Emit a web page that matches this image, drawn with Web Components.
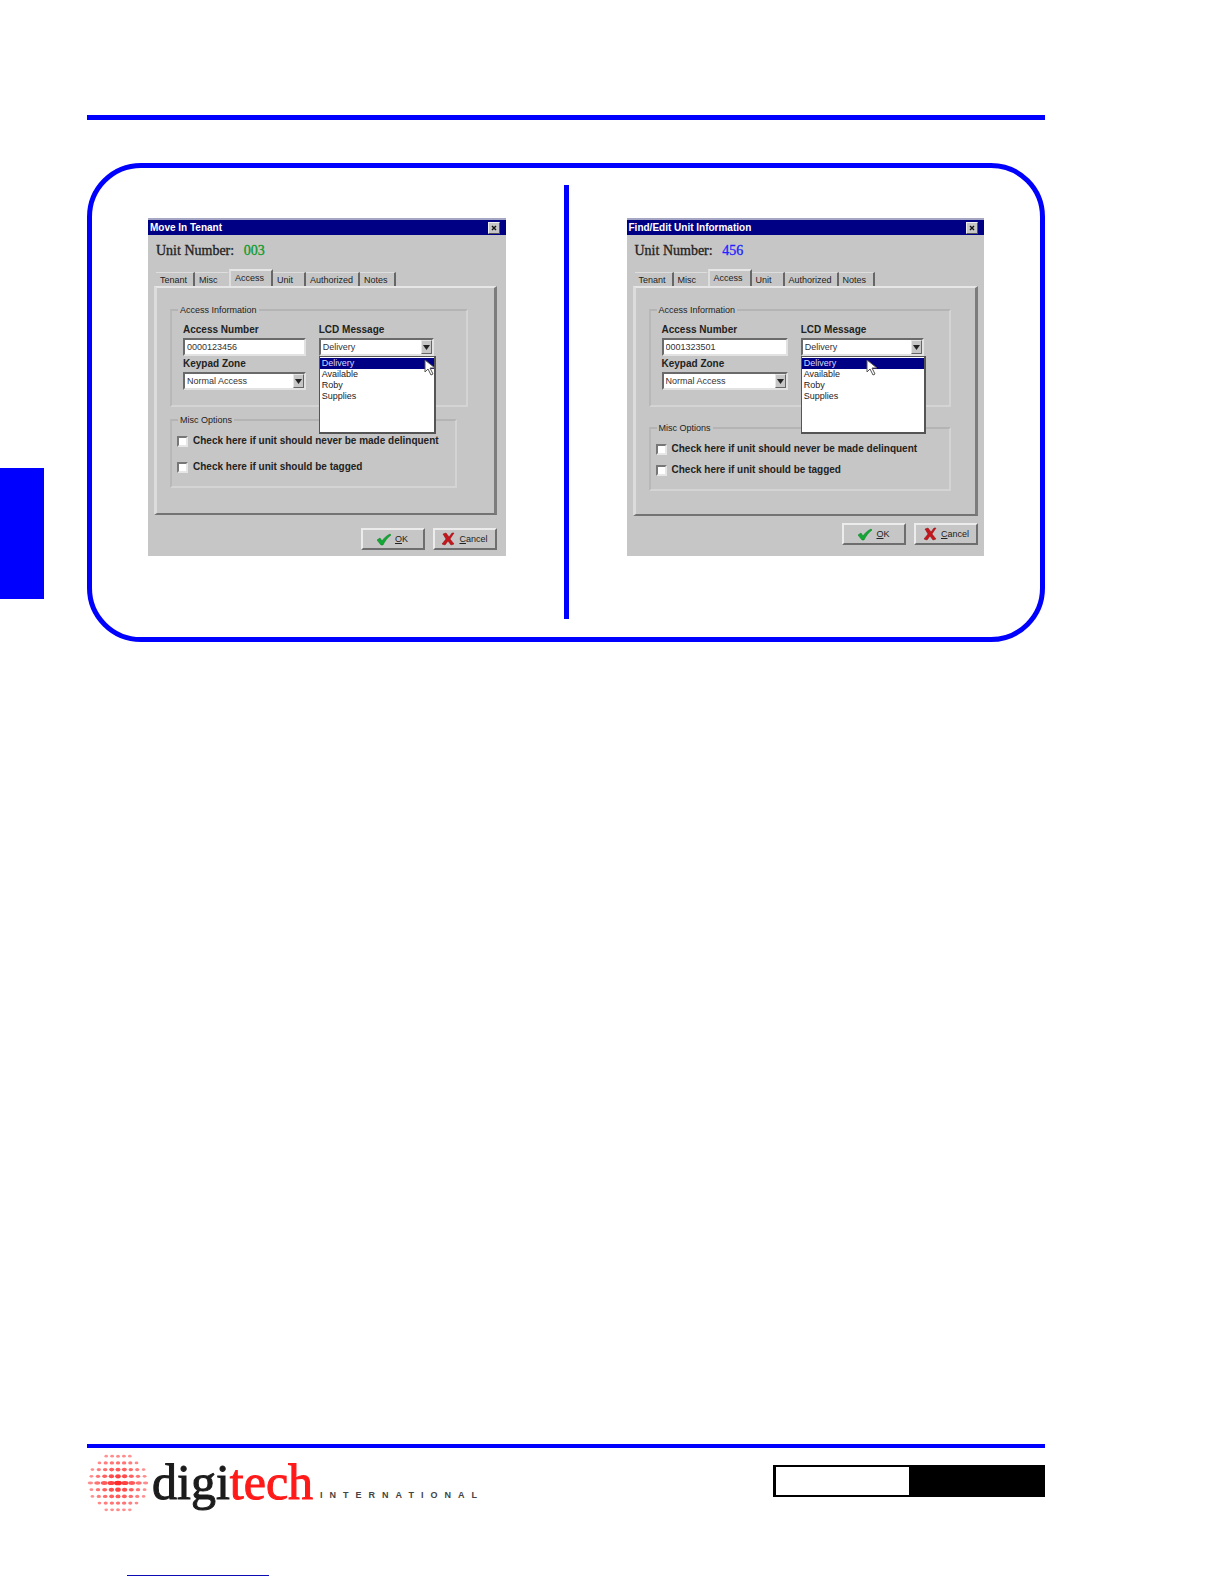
<!DOCTYPE html>
<html lang="en">
<head>
<meta charset="utf-8">
<title>Access tab</title>
<style>
  body {
    margin: 0;
    background: #fff;
    font-family: "Liberation Sans", Arial, sans-serif;
  }

  .find-edit {
    --fields: 125fr 122fr;
    --group-end: 25px;
    --options-top: 10px;
    --options-gap: 9px;
    --options-right: 0;
    --frame-right: 6px;
    --actions-top: 7px;
    --actions-bottom: 11px;
    --panel-end: 24px;
    --groups-gap: 16px;
    --panel-bottom: 23px;
    --value-color: #2222ff;
  }
</style>
</head>
<body>

<manual-page>
  <figure-panel slot="figure">
    <app-dialog slot="left" title-text="Move In Tenant" unit="003">
      <tab-strip slot="tabs" tabs="Tenant|Misc|Access|Unit|Authorized|Notes" active="Access"></tab-strip>
      <group-box legend="Access Information">
        <field-grid>
          <text-field label="Access Number" value="0000123456"></text-field>
          <combo-box label="LCD Message" options="Delivery|Available|Roby|Supplies" pointer="end" open></combo-box>
          <combo-box label="Keypad Zone" options="Normal Access"></combo-box>
        </field-grid>
      </group-box>
      <group-box legend="Misc Options" class="options">
        <check-option label="Check here if unit should never be made delinquent"></check-option>
        <check-option label="Check here if unit should be tagged"></check-option>
      </group-box>
      <action-button slot="actions" icon="ok" label="OK"></action-button>
      <action-button slot="actions" icon="cancel" label="Cancel"></action-button>
    </app-dialog>

    <app-dialog slot="right" class="find-edit" title-text="Find/Edit Unit Information" unit="456">
      <tab-strip slot="tabs" tabs="Tenant|Misc|Access|Unit|Authorized|Notes" active="Access"></tab-strip>
      <group-box legend="Access Information">
        <field-grid>
          <text-field label="Access Number" value="0001323501"></text-field>
          <combo-box label="LCD Message" options="Delivery|Available|Roby|Supplies" pointer="middle" open></combo-box>
          <combo-box label="Keypad Zone" options="Normal Access"></combo-box>
        </field-grid>
      </group-box>
      <group-box legend="Misc Options" class="options">
        <check-option label="Check here if unit should never be made delinquent"></check-option>
        <check-option label="Check here if unit should be tagged"></check-option>
      </group-box>
      <action-button slot="actions" icon="ok" label="OK"></action-button>
      <action-button slot="actions" icon="cancel" label="Cancel"></action-button>
    </app-dialog>
  </figure-panel>

  <brand-logo slot="footer"></brand-logo>
  <page-number slot="footer"></page-number>
</manual-page>

<script>
class ManualPage extends HTMLElement {
  constructor() {
    super();
    this.attachShadow({ mode: "open" });
  }

  connectedCallback() {
    this.shadowRoot.innerHTML = `
      <style>
        :host {
          display: grid;
          grid-template-columns: 87px minmax(0, 1fr) 179px;
          grid-template-rows: auto auto 1fr auto;
          box-sizing: border-box;
          min-height: 100vh;
          padding-top: 115px;
        }
        header {
          grid-area: 1 / 2;
          height: 5px;
          margin-bottom: 43px;
          background: #0000ff;
        }
        .thumb {
          grid-area: 2 / 1;
          width: 44px;
          height: 131px;
          margin-top: 305px;
          background: #0000ff;
        }
        main { grid-area: 2 / 2; }
        footer { grid-area: 4 / 2; }
        .bar {
          display: flex;
          justify-content: space-between;
          align-items: flex-start;
          height: 127px;
          border-top: 4px solid #0000ff;
        }
        .underline {
          width: 142px;
          height: 1px;
          margin: 0 0 8px 40px;
          background: #0c0cb4;
        }
      </style>

      <header></header>
      <div class="thumb"></div>
      <main><slot name="figure"></slot></main>
      <footer>
        <div class="bar"><slot name="footer"></slot></div>
        <div class="underline"></div>
      </footer>
    `;
  }
}

class FigurePanel extends HTMLElement {
  constructor() {
    super();
    this.attachShadow({ mode: "open" });
  }

  connectedCallback() {
    this.shadowRoot.innerHTML = `
      <style>
        :host {
          display: grid;
          grid-template-columns: minmax(0, 1fr) 5px minmax(0, 1fr);
          border: 5px solid #0000ff;
          border-radius: 54px;
          padding: 17px 0 18px;
        }
        .side { padding: 33px 58px 63px 56px; }
        .divider + .side { padding: 33px 56px 63px 58px; }
        .divider { background: #0000ff; }
      </style>

      <div class="side"><slot name="left"></slot></div>
      <div class="divider"></div>
      <div class="side"><slot name="right"></slot></div>
    `;
  }
}

class AppDialog extends HTMLElement {
  constructor() {
    super();
    this.attachShadow({ mode: "open" });
  }

  connectedCallback() {
    const title = this.getAttribute("title-text");
    const unit = this.getAttribute("unit");

    this.shadowRoot.innerHTML = `
      <style>
        :host {
          display: block;
          background: #c6c6c6;
          border-top: 2px solid #a5a5c4;
          color: #222;
        }
        .title {
          display: flex;
          align-items: center;
          justify-content: space-between;
          height: 15px;
          padding: 0 6px 0 2px;
          background: #000084;
          color: #fff;
          font-size: 10px;
          font-weight: bold;
        }
        .title button {
          width: 12px;
          height: 12px;
          padding: 0;
          border: 1px solid;
          border-color: #eee #555 #555 #eee;
          background: #c6c6c6;
          display: grid;
          place-items: center;
        }
        .unit {
          height: 20px;
          margin: 5px 8px 9px;
          font: 14px/22px "Liberation Serif", "Times New Roman", serif;
          -webkit-text-stroke: 0.3px;
        }
        .unit output {
          margin-left: 6px;
          color: var(--value-color, #0a9a2a);
        }
        .frame { margin: 0 var(--frame-right, 9px) 0 6px; }
        .panel {
          border: solid;
          border-width: 2px 3px 2px 3px;
          border-color: #e6e6e6 #7c7c7c #737373 #dcdcdc;
          padding: 17px var(--panel-end, 26px) var(--panel-bottom, 25px) 13px;
        }
        .actions {
          display: flex;
          justify-content: flex-end;
          gap: 8px;
          padding: var(--actions-top, 13px) var(--frame-right, 9px) var(--actions-bottom, 6px);
        }
      </style>

      <div class="title">
        <span>${title}</span>
        <button aria-label="Close">
          <svg width="6" height="6" viewBox="0 0 6 6"><path d="M1 1l4 4M5 1l-4 4" stroke="#111" stroke-width="1.4"/></svg>
        </button>
      </div>
      <div class="unit">Unit Number: <output>${unit}</output></div>
      <div class="frame">
        <slot name="tabs"></slot>
        <div class="panel"><slot></slot></div>
      </div>
      <div class="actions"><slot name="actions"></slot></div>
    `;
  }
}

class TabStrip extends HTMLElement {
  constructor() {
    super();
    this.attachShadow({ mode: "open" });
  }

  connectedCallback() {
    const active = this.getAttribute("active");
    const tabs = this.getAttribute("tabs").split("|");

    this.shadowRoot.innerHTML = `
      <style>
        :host { display: block; }
        div {
          display: grid;
          grid-template-columns: 39px 34px 44px 33px 54px 36px;
          align-items: end;
          height: 17px;
          padding-left: 2px;
        }
        button {
          height: 14px;
          padding: 0 0 0 4px;
          border: 0;
          border-top: 1px solid #dedede;
          border-right: 2px solid #666;
          background: none;
          color: #222;
          font: 9px/12px "Liberation Sans", Arial, sans-serif;
          text-align: left;
        }
        button:nth-child(2) { border-right-color: transparent; }
        button[aria-selected="true"] {
          height: 17px;
          padding-bottom: 1px;
          border-top: 2px solid #e6e6e6;
          border-left: 2px solid #dedede;
        }
      </style>
      <div role="tablist">
        ${tabs.map(t => `<button role="tab" aria-selected="${t === active}">${t}</button>`).join("")}
      </div>
    `;

    const buttons = this.shadowRoot.querySelectorAll("button");
    buttons.forEach(btn => {
      btn.onclick = () => {
        buttons.forEach(b => b.setAttribute("aria-selected", b === btn));
      };
    });
  }
}

class GroupBox extends HTMLElement {
  constructor() {
    super();
    this.attachShadow({ mode: "open" });
  }

  connectedCallback() {
    this.shadowRoot.innerHTML = `
      <style>
        :host { display: block; }
        :host(.options) {
          margin-top: var(--groups-gap, 8px);
          margin-right: var(--options-right, 11px);
        }
        fieldset {
          min-width: 0;
          margin: 0;
          border: 2px solid;
          border-color: #b4b4b4 #d4d4d4 #d4d4d4 #b8b8b8;
          padding: 9px var(--group-end, 32px) 15px 11px;
        }
        :host(.options) fieldset {
          display: grid;
          gap: var(--options-gap, 14px);
          padding: var(--options-top, 10px) 0 13px 5px;
        }
        legend {
          margin-left: -5px;
          padding: 0 2px;
          font-size: 9px;
          line-height: 10px;
        }
        :host(.options) legend { margin-left: 1px; }
      </style>
      <fieldset>
        <legend>${this.getAttribute("legend")}</legend>
        <slot></slot>
      </fieldset>
    `;
  }
}

class FieldGrid extends HTMLElement {
  constructor() {
    super();
    this.attachShadow({ mode: "open" });
    this.shadowRoot.innerHTML = `
      <style>
        :host {
          display: grid;
          grid-template-columns: var(--fields, 123fr 115fr);
          gap: 2px 13px;
        }
      </style>
      <slot></slot>
    `;
  }
}

const FIELD_STYLE = `
  :host { display: block; min-width: 0; }
  label {
    display: block;
    margin-bottom: 2px;
    font-size: 10px;
    font-weight: bold;
    line-height: 12px;
  }
  input, select {
    display: block;
    box-sizing: border-box;
    width: 100%;
    height: 18px;
    margin: 0;
    padding: 0 2px;
    border: 2px solid;
    border-color: #6a6a6a #e2e2e2 #e2e2e2 #6a6a6a;
    border-radius: 0;
    background: #fff;
    color: #333;
    font: 9px/12px "Liberation Sans", Arial, sans-serif;
    appearance: none;
  }
`;

class TextField extends HTMLElement {
  constructor() {
    super();
    this.attachShadow({ mode: "open" });
  }

  connectedCallback() {
    this.shadowRoot.innerHTML = `
      <style>${FIELD_STYLE}</style>
      <label for="field">${this.getAttribute("label")}</label>
      <input id="field" type="text" value="${this.getAttribute("value")}">
    `;
  }
}

class ComboBox extends HTMLElement {
  constructor() {
    super();
    this.attachShadow({ mode: "open" });
  }

  connectedCallback() {
    const options = this.getAttribute("options").split("|");
    const list = `
      <ul>
        ${options.map((o, i) => `<li class="${i === 0 ? "current" : ""}">${o}</li>`).join("")}
      </ul>
      <svg class="pointer" width="12" height="17" viewBox="0 0 12 17">
        <path d="M1 1v12l3-3 3 6 2-1-3-6h5z" fill="#fff" stroke="#555"/>
      </svg>
    `;

    this.shadowRoot.innerHTML = `
      <style>
        ${FIELD_STYLE}
        .box { position: relative; }
        .arrow {
          position: absolute;
          top: 2px;
          right: 2px;
          width: 11px;
          height: 14px;
          box-sizing: border-box;
          border: 1px solid;
          border-color: #e6e6e6 #666 #666 #e6e6e6;
          background: #c6c6c6;
          display: grid;
          place-items: center;
          pointer-events: none;
        }
        ul {
          position: absolute;
          z-index: 1;
          top: 100%;
          left: 0;
          right: -2px;
          box-sizing: border-box;
          height: 78px;
          margin: 0;
          padding: 1px 0;
          border: 1px solid #555;
          border-width: 1px 2px 2px 1px;
          background: #fff;
          color: #222;
          list-style: none;
          font-size: 9px;
          line-height: 11px;
        }
        li { padding-left: 2px; }
        .current { background: #000084; color: #d8d8ff; }
        .pointer {
          position: absolute;
          z-index: 2;
          top: 21px;
          right: -2px;
        }
        :host([pointer="middle"]) .pointer { right: 46px; }
      </style>
      <label for="field">${this.getAttribute("label")}</label>
      <div class="box">
        <select id="field">${options.map(o => `<option>${o}</option>`).join("")}</select>
        <span class="arrow"><svg width="7" height="5" viewBox="0 0 7 5"><path d="M0 0h7L3.5 5z" fill="#222"/></svg></span>
        ${this.hasAttribute("open") ? list : ""}
      </div>
    `;
  }
}

class CheckOption extends HTMLElement {
  constructor() {
    super();
    this.attachShadow({ mode: "open" });
  }

  connectedCallback() {
    this.shadowRoot.innerHTML = `
      <style>
        :host { display: block; }
        label {
          display: flex;
          align-items: center;
          gap: 5px;
          height: 12px;
          font-size: 10px;
          font-weight: bold;
          line-height: 12px;
          white-space: nowrap;
        }
        input {
          appearance: none;
          flex: none;
          width: 11px;
          height: 11px;
          margin: 0;
          border: 2px solid;
          border-color: #777 #e6e6e6 #e6e6e6 #777;
          background: #fff;
        }
        input:checked { background: #222; }
      </style>
      <label><input type="checkbox">${this.getAttribute("label")}</label>
    `;
  }
}

class ActionButton extends HTMLElement {
  constructor() {
    super();
    this.attachShadow({ mode: "open" });
  }

  connectedCallback() {
    const label = this.getAttribute("label");
    const icons = {
      ok: `<path d="M0 8l3-2 2 3c2-3 4-5 8-7l1 1c-4 3-6 6-8 10H4z" fill="#12a833" stroke="#0b7d24" stroke-width=".5"/>`,
      cancel: `<path d="M2 2l3-1 3 4 3-4h2L9 7l4 5-3 1-3-4-3 4-3-1 4-5z" fill="#c4161c" stroke="#8e0c10" stroke-width=".5"/>`
    };

    this.shadowRoot.innerHTML = `
      <style>
        :host { display: block; }
        button {
          display: flex;
          align-items: center;
          justify-content: center;
          gap: 4px;
          box-sizing: border-box;
          width: 64px;
          height: 22px;
          padding: 0;
          border: 2px solid;
          border-color: #ececec #6e6e6e #6e6e6e #ececec;
          background: #c6c6c6;
          color: #222;
          font: 9px/12px "Liberation Sans", Arial, sans-serif;
        }
      </style>
      <button>
        <svg width="14" height="14" viewBox="0 0 14 14">${icons[this.getAttribute("icon")]}</svg>
        <span><u>${label[0]}</u>${label.slice(1)}</span>
      </button>
    `;
  }
}

class BrandLogo extends HTMLElement {
  constructor() {
    super();
    this.attachShadow({ mode: "open" });
  }

  // halftone ball: even grid of dots, largest at the centre
  globe() {
    const dots = [];
    for (let row = -4; row <= 4; row++) {
      for (let col = -4; col <= 4; col++) {
        const y = row * 6.7;
        const x = col * (6.9 - Math.abs(row) * 0.25);
        const edge = Math.hypot(x, y) / 30;
        if (edge > 1.05) continue;
        const r = 3.1 - edge * 1.3;
        dots.push(`<ellipse cx="${(31 + x).toFixed(1)}" cy="${(29 + y).toFixed(1)}" rx="${(row === 0 ? r + 0.8 : r).toFixed(1)}" ry="${(r * 0.75).toFixed(1)}" opacity="${(1 - edge * 0.5).toFixed(2)}"/>`);
      }
    }
    return dots.join("");
  }

  connectedCallback() {
    this.shadowRoot.innerHTML = `
      <style>
        :host {
          display: flex;
          align-items: flex-start;
          padding-top: 6px;
        }
        .word {
          margin-left: 4px;
          font: 50px/56px "Liberation Serif", "Times New Roman", serif;
          color: #1c1c1c;
          -webkit-text-stroke: 1px;
        }
        .word span { color: #ff1a1a; }
        .sub {
          margin: 35px 0 0 7px;
          font-size: 9px;
          font-weight: bold;
          line-height: 12px;
          letter-spacing: 7px;
          color: #444;
        }
      </style>
      <svg width="61" height="58" viewBox="0 0 61 58" fill="#ff2a2a">${this.globe()}</svg>
      <div class="word">digi<span>tech</span></div>
      <div class="sub">INTERNATIONAL</div>
    `;
  }
}

class PageNumber extends HTMLElement {
  constructor() {
    super();
    this.attachShadow({ mode: "open" });
    this.shadowRoot.innerHTML = `
      <style>
        :host {
          display: grid;
          grid-template-columns: 133px 133px;
          gap: 3px;
          box-sizing: border-box;
          height: 32px;
          margin-top: 17px;
          border: 2px solid #000;
          border-left-width: 3px;
          border-right-width: 0;
          background: #000;
        }
        .blank { background: #fff; }
      </style>
      <div class="blank"></div>
      <div></div>
    `;
  }
}

customElements.define("manual-page", ManualPage);
customElements.define("figure-panel", FigurePanel);
customElements.define("app-dialog", AppDialog);
customElements.define("tab-strip", TabStrip);
customElements.define("group-box", GroupBox);
customElements.define("field-grid", FieldGrid);
customElements.define("text-field", TextField);
customElements.define("combo-box", ComboBox);
customElements.define("check-option", CheckOption);
customElements.define("action-button", ActionButton);
customElements.define("brand-logo", BrandLogo);
customElements.define("page-number", PageNumber);
</script>
</body>
</html>
